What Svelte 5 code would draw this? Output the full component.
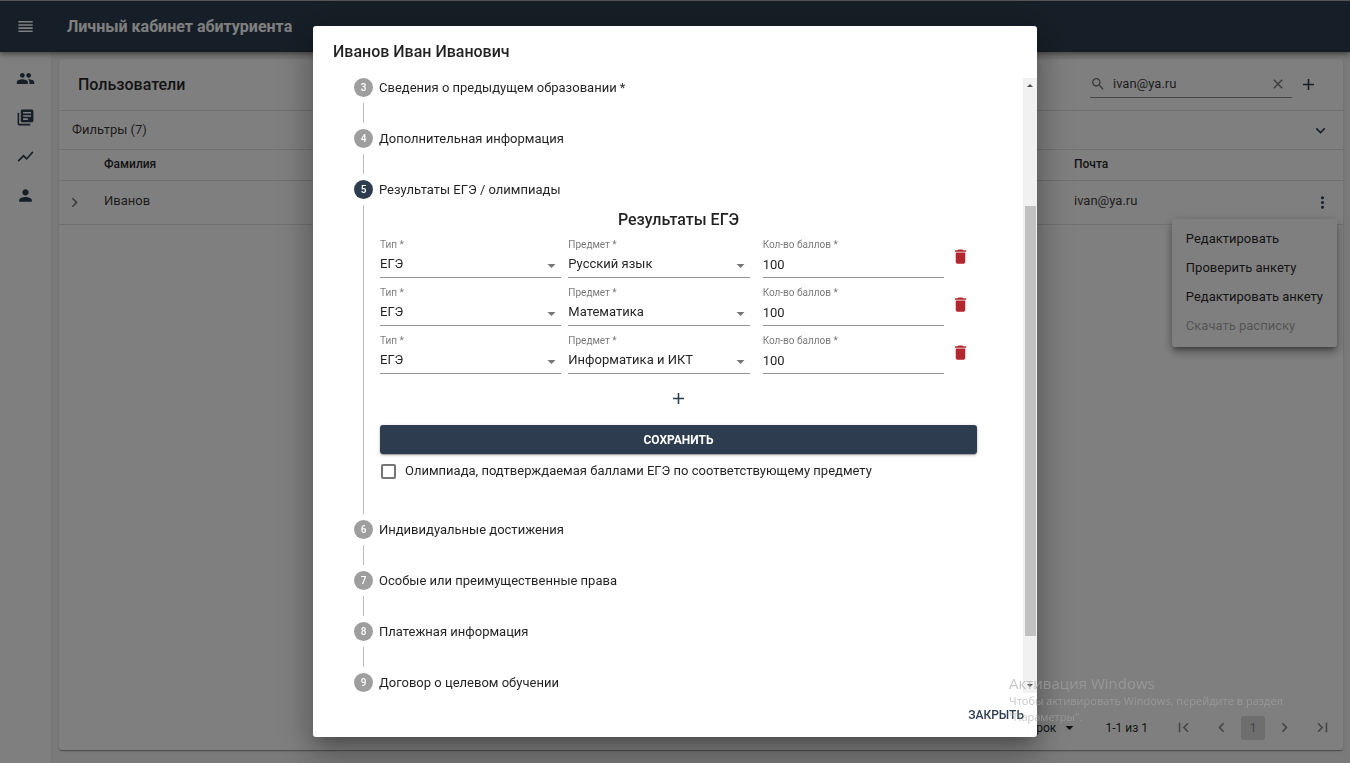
<script>
  const icons = {
    menu: 'M3 15h18v-2H3v2zm0 4h18v-2H3v2zm0-8h18V9H3v2zm0-6v2h18V5H3z',
    people: 'M16 11c1.66 0 2.99-1.34 2.99-3S17.66 5 16 5c-1.66 0-3 1.34-3 3s1.34 3 3 3zm-8 0c1.66 0 2.99-1.34 2.99-3S9.66 5 8 5C6.34 5 5 6.34 5 8s1.34 3 3 3zm0 2c-2.33 0-7 1.17-7 3.5V19h14v-2.5c0-2.33-4.67-3.5-7-3.5zm8 0c-.29 0-.62.02-.97.05 1.16.84 1.97 1.97 1.97 3.45V19h6v-2.5c0-2.33-4.67-3.5-7-3.5z',
    books: 'M4 6H2v14c0 1.1.9 2 2 2h14v-2H4V6zm16-4H8c-1.1 0-2 .9-2 2v12c0 1.1.9 2 2 2h12c1.1 0 2-.9 2-2V4c0-1.1-.9-2-2-2zm-1 9H9V9h10v2zm-4 4H9v-2h6v2zm4-8H9V5h10v2z',
    chart: 'M3.5 18.49l6-6.01 4 4L22 6.92l-1.41-1.41-7.09 7.97-4-4L2 16.99z',
    person: 'M12 12c2.21 0 4-1.79 4-4s-1.79-4-4-4-4 1.79-4 4 1.79 4 4 4zm0 2c-2.67 0-8 1.34-8 4v2h16v-2c0-2.66-5.33-4-8-4z',
    search: 'M15.5 14h-.79l-.28-.27C15.41 12.59 16 11.11 16 9.5 16 5.91 13.09 3 9.5 3S3 5.91 3 9.5 5.91 16 9.5 16c1.61 0 3.09-.59 4.23-1.57l.27.28v.79l5 4.99L20.49 19l-4.99-5zm-6 0C7.01 14 5 11.99 5 9.5S7.01 5 9.5 5 14 7.01 14 9.5 11.99 14 9.5 14z',
    clear: 'M19 6.41L17.59 5 12 10.59 6.41 5 5 6.41 10.59 12 5 17.59 6.41 19 12 13.41 17.59 19 19 17.59 13.41 12z',
    add: 'M19 13h-6v6h-2v-6H5v-2h6V5h2v6h6v2z',
    down: 'M16.59 8.59L12 13.17 7.41 8.59 6 10l6 6 6-6z',
    more: 'M12 8c1.1 0 2-.9 2-2s-.9-2-2-2-2 .9-2 2 .9 2 2 2zm0 2c-1.1 0-2 .9-2 2s.9 2 2 2 2-.9 2-2-.9-2-2-2zm0 6c-1.1 0-2 .9-2 2s.9 2 2 2 2-.9 2-2-.9-2-2-2z',
    left: 'M15.41 7.41L14 6l-6 6 6 6 1.41-1.41L10.83 12z',
    right: 'M10 6L8.59 7.41 13.17 12l-4.58 4.59L10 18l6-6z',
    first: 'M18.41 16.59L13.82 12l4.59-4.59L17 6l-6 6 6 6zM6 6h2v12H6z',
    last: 'M5.59 7.41L10.18 12l-4.59 4.59L7 18l6-6-6-6zM16 6h2v12h-2z',
    trash: 'M6 19c0 1.1.9 2 2 2h8c1.1 0 2-.9 2-2V7H6v12zM19 4h-3.5l-1-1h-5l-1 1H5v2h14V4z',
    drop: 'M7 10l5 5 5-5z'
  };

  const nav = [
    { icon: 'people', label: 'Пользователи' },
    { icon: 'books', label: 'Заявления' },
    { icon: 'chart', label: 'Статистика' },
    { icon: 'person', label: 'Профиль' }
  ];

  const steps = [
    { n: 3, title: 'Сведения о предыдущем образовании *' },
    { n: 4, title: 'Дополнительная информация' },
    { n: 5, title: 'Результаты ЕГЭ / олимпиады' },
    { n: 6, title: 'Индивидуальные достижения' },
    { n: 7, title: 'Особые или преимущественные права' },
    { n: 8, title: 'Платежная информация' },
    { n: 9, title: 'Договор о целевом обучении' }
  ];

  const subjects = ['Русский язык', 'Математика', 'Информатика и ИКТ'];
  let active = $state(5);
  let exams = $state(subjects.map((subject) => ({ type: 'ЕГЭ', subject, score: '100' })));
  let olympiad = $state(false);
  let query = $state('ivan@ya.ru');

  const addExam = () => exams.push({ type: 'ЕГЭ', subject: subjects[0], score: '' });
  const removeExam = (i) => exams.splice(i, 1);
</script>

{#snippet icon(name)}
  <svg class="icon" viewBox="0 0 24 24" aria-hidden="true"><path d={icons[name]} /></svg>
{/snippet}

<div class="shell">
  <header class="appbar">
    <button class="ib" aria-label="Меню">{@render icon('menu')}</button>
    <h1>Личный кабинет абитуриента</h1>
  </header>

  <div class="body">
    <nav class="side">
      {#each nav as item}
        <a href="#{item.icon}" aria-label={item.label}>{@render icon(item.icon)}</a>
      {/each}
    </nav>

    <main class="card">
      <div class="toolbar">
        <h2>Пользователи</h2>
        <div class="search">
          {@render icon('search')}
          <input type="text" aria-label="Поиск" bind:value={query} />
          <button class="ib" aria-label="Очистить" onclick={() => (query = '')}>{@render icon('clear')}</button>
        </div>
        <button class="ib add" aria-label="Добавить">{@render icon('add')}</button>
      </div>

      <button class="filters"><span>Фильтры (7)</span>{@render icon('down')}</button>

      <table>
        <colgroup><col class="c-open" /><col /><col class="c-mail" /><col class="c-act" /></colgroup>
        <thead>
          <tr><th></th><th>Фамилия</th><th>Почта</th><th></th></tr>
        </thead>
        <tbody>
          <tr>
            <td class="open"><button class="ib" aria-label="Раскрыть">{@render icon('right')}</button></td>
            <td>Иванов</td>
            <td>ivan@ya.ru</td>
            <td class="act">
              <button class="ib" aria-label="Действия">{@render icon('more')}</button>
              <div class="menu">
                <button>Редактировать</button>
                <button>Проверить анкету</button>
                <button>Редактировать анкету</button>
                <button disabled>Скачать расписку</button>
              </div>
            </td>
          </tr>
        </tbody>
      </table>

      <footer class="pager">
        <div class="rows">
          <select aria-label="Строк на странице"><option>5 строк</option></select>
          {@render icon('drop')}
        </div>
        <span class="range">1-1 из 1</span>
        <button class="ib" aria-label="Первая страница">{@render icon('first')}</button>
        <button class="ib" aria-label="Предыдущая страница">{@render icon('left')}</button>
        <button class="page">1</button>
        <button class="ib" aria-label="Следующая страница">{@render icon('right')}</button>
        <button class="ib" aria-label="Последняя страница">{@render icon('last')}</button>
      </footer>
    </main>
  </div>
</div>

<div class="backdrop">
  <div class="dialog" role="dialog" aria-modal="true" aria-labelledby="dialog-title">
    <h2 id="dialog-title">Иванов Иван Иванович</h2>

    <div class="scroller">
      <div class="content">
        {#each steps as step, i}
          <button class="step" class:active={active === step.n} onclick={() => (active = step.n)}>
            <span class="num">{step.n}</span><span>{step.title}</span>
          </button>
          {#if active === step.n}
            <div class="step-body">
              <h3>Результаты ЕГЭ</h3>
              {#each exams as exam, row}
                <div class="exam">
                  <div class="field">
                    <label for="type-{row}">Тип *</label>
                    <select id="type-{row}" bind:value={exam.type}><option>ЕГЭ</option></select>
                    {@render icon('drop')}
                  </div>
                  <div class="field">
                    <label for="subject-{row}">Предмет *</label>
                    <select id="subject-{row}" bind:value={exam.subject}>
                      {#each subjects as s}<option>{s}</option>{/each}
                    </select>
                    {@render icon('drop')}
                  </div>
                  <div class="field score">
                    <label for="score-{row}">Кол-во баллов *</label>
                    <input id="score-{row}" type="text" bind:value={exam.score} />
                  </div>
                  <button class="ib del" aria-label="Удалить" onclick={() => removeExam(row)}>{@render icon('trash')}</button>
                </div>
              {/each}
              <button class="ib plus" aria-label="Добавить результат" onclick={addExam}>{@render icon('add')}</button>
              <button class="save">СОХРАНИТЬ</button>
              <label class="check">
                <input type="checkbox" bind:checked={olympiad} />
                <span>Олимпиада, подтверждаемая баллами ЕГЭ по соответствующему предмету</span>
              </label>
            </div>
          {:else if i < steps.length - 1}
            <div class="connector"></div>
          {/if}
        {/each}
      </div>
      <div class="bar" aria-hidden="true">
        <svg viewBox="0 0 14 14"><path d="M4 9l3-3 3 3z" /></svg>
        <div class="track"><div class="thumb"></div></div>
        <svg viewBox="0 0 14 14"><path d="M4 5l3 3 3-3z" /></svg>
      </div>
    </div>

    <div class="actions"><button>ЗАКРЫТЬ</button></div>
  </div>
</div>

<div class="watermark">
  <strong>Активация Windows</strong>
  <span>Чтобы активировать Windows, перейдите в раздел "Параметры".</span>
</div>

<style>
  :global(body) {
    margin: 0;
    background: #f4f4f4;
    color: rgba(0, 0, 0, 0.87);
    font-family: Roboto, 'Liberation Sans', sans-serif;
    font-size: 13px;
    line-height: 20px;
  }
  * { box-sizing: border-box; }
  h1, h2, h3 { margin: 0; font-size: 16px; font-weight: 500; line-height: 24px; }
  button, input, select {
    margin: 0;
    padding: 0;
    border: 0;
    border-radius: 0;
    background: none;
    color: inherit;
    font: inherit;
    outline: 0;
  }
  select { appearance: none; }
  .icon { display: block; flex: none; width: 19px; height: 19px; fill: currentColor; }
  .ib { display: flex; flex: none; align-items: center; justify-content: center; }

  .shell { display: flex; flex-direction: column; height: 100vh; }
  .appbar {
    position: relative;
    display: flex;
    flex: none;
    align-items: center;
    gap: 32px;
    height: 52px;
    padding: 0 16px;
    border-top: 1px solid #aaa;
    background: #2d3d4f;
    color: #fff;
    box-shadow: 0 2px 4px rgba(0, 0, 0, 0.3), 0 3px 8px rgba(0, 0, 0, 0.2);
  }
  .appbar h1 { font-weight: 700; }
  .body { display: flex; flex: 1; min-height: 0; }
  .side {
    display: flex;
    flex: none;
    flex-direction: column;
    gap: 20px;
    width: 52px;
    padding: 17px 16px;
    background: #fff;
    border-right: 1px solid #eee;
    color: #2d3d4f;
  }
  .side a { color: inherit; }
  .card {
    display: flex;
    flex: 1;
    flex-direction: column;
    min-width: 0;
    margin: 7px 7px 13px;
    border-radius: 3px;
    background: #fff;
    box-shadow: 0 2px 1px -1px rgba(0, 0, 0, 0.2), 0 1px 1px rgba(0, 0, 0, 0.14), 0 1px 3px rgba(0, 0, 0, 0.12);
  }
  .toolbar { display: flex; align-items: center; height: 52px; padding: 0 19px; border-bottom: 1px solid #e0e0e0; }
  .search {
    display: flex;
    align-items: center;
    width: 202px;
    height: 26px;
    margin-left: auto;
    border-bottom: 1px solid #8c8c8c;
  }
  .search .icon { width: 16px; height: 16px; color: #757575; }
  .search input { flex: 1; min-width: 0; padding-left: 7px; }
  .search button { width: 28px; }
  .add { width: 32px; color: #2d3d4f; }
  .search, .filters, td { color: rgba(0, 0, 0, 0.8); }
  .filters {
    display: flex;
    align-items: center;
    justify-content: space-between;
    height: 39px;
    padding: 0 13px;
    border-bottom: 1px solid #e0e0e0;
  }
  .filters .icon { color: #2d3d4f; }
  table { width: 100%; border-collapse: collapse; table-layout: fixed; }
  .c-open { width: 32px; }
  .c-mail { width: 242px; }
  .c-act { width: 40px; }
  th, td { height: 30px; padding: 0 13px; border-bottom: 1px solid #e0e0e0; text-align: left; }
  th { padding-bottom: 2px; font-size: 12px; font-weight: 500; }
  td { height: 44px; padding-bottom: 2px; }
  td.open { padding: 0 6px; }
  .open .icon { color: #757575; }
  td.act { position: relative; padding: 0 10px; }
  .act .ib { color: #2d3d4f; }
  .menu {
    position: absolute;
    top: 38px;
    right: 6px;
    display: flex;
    flex-direction: column;
    width: max-content;
    padding: 6px 0;
    border-radius: 3px;
    background: #fff;
    box-shadow: 0 4px 4px -2px rgba(0, 0, 0, 0.3), 0 6px 8px rgba(0, 0, 0, 0.2), 0 2px 12px rgba(0, 0, 0, 0.2);
  }
  .menu button { height: 29px; padding: 0 14px; color: rgba(0, 0, 0, 0.87); text-align: left; }
  .menu button:disabled { opacity: 0.4; }
  .pager {
    display: flex;
    align-items: center;
    justify-content: flex-end;
    gap: 19px;
    height: 45px;
    margin-top: auto;
    padding-right: 11px;
    font-size: 12px;
  }
  .pager .ib, .page { color: #8a8a8a; }
  .page { width: 24px; height: 24px; margin: 0 -9px; border-radius: 3px; background: #dcdcdc; }
  .rows { display: flex; align-items: center; gap: 4px; }
  .range { margin: 0 7px; }

  .backdrop {
    position: fixed;
    inset: 0;
    display: flex;
    align-items: center;
    justify-content: center;
    padding: 26px;
    background: rgba(0, 0, 0, 0.5);
  }
  .dialog {
    display: flex;
    flex-direction: column;
    width: 100%;
    max-width: 724px;
    height: 100%;
    border-radius: 3px;
    background: #fff;
    box-shadow: 0 9px 12px -6px rgba(0, 0, 0, 0.2), 0 19px 30px 2px rgba(0, 0, 0, 0.14), 0 7px 37px 6px rgba(0, 0, 0, 0.2);
  }
  .dialog h2 { flex: none; padding: 14px 20px; }
  .scroller { display: flex; flex: 1; min-height: 0; overflow: hidden; }
  .content { flex: 1; min-width: 0; padding: 0 46px 0 41px; }
  .step { display: flex; align-items: center; gap: 6px; height: 19px; color: rgba(0, 0, 0, 0.87); text-align: left; }
  .num {
    display: flex;
    align-items: center;
    justify-content: center;
    width: 19px;
    height: 19px;
    border-radius: 50%;
    background: #9e9e9e;
    color: #fff;
    font-size: 10px;
    font-weight: 500;
  }
  .active .num { background: #2d3d4f; }
  .connector { height: 20px; margin: 6px 9px; border-left: 1px solid #bdbdbd; }
  .step-body {
    display: flex;
    flex-direction: column;
    margin: 6px 0 6px 9px;
    padding: 3px 0 26px 16px;
    border-left: 1px solid #bdbdbd;
  }
  h3 { text-align: center; }
  .exam { display: flex; gap: 7px; height: 48px; padding: 6px 6px 0 0; }
  .field { position: relative; display: flex; flex: 1; flex-direction: column; min-width: 0; height: 40px; border-bottom: 1px solid #949494; }
  .field label { color: rgba(0, 0, 0, 0.54); font-size: 10px; line-height: 14px; }
  .field select, .field input { width: 100%; height: 24px; }
  .field .icon { position: absolute; right: 0; bottom: 2px; color: #757575; pointer-events: none; }
  .score { margin-left: 6px; }
  .del { width: 20px; height: 20px; margin-top: 8px; color: #b3262e; }
  .plus { align-self: center; height: 20px; margin: 12px 0 17px; color: #2d3d4f; }
  .save {
    height: 29px;
    border-radius: 3px;
    background: #2d3d4f;
    color: #fff;
    font-size: 12px;
    font-weight: 700;
    box-shadow: 0 2px 1px -1px rgba(0, 0, 0, 0.2), 0 1px 3px rgba(0, 0, 0, 0.3);
  }
  .check { display: flex; align-items: center; gap: 9px; height: 34px; padding-left: 1px; }
  .check input { appearance: none; width: 15px; height: 15px; border: 2px solid #757575; border-radius: 2px; }
  .check input:checked { background: #2d3d4f; }
  .bar { display: flex; flex: none; flex-direction: column; width: 14px; background: #f1f1f1; }
  .bar svg { flex: none; width: 14px; height: 14px; fill: #505050; }
  .track { flex: 1; padding-top: 114px; }
  .thumb { height: 91%; width: 11px; margin: 0 auto; background: #c1c1c1; }
  .actions { display: flex; flex: none; align-items: center; justify-content: flex-end; height: 44px; padding: 0 13px; }
  .actions button { color: #2d3d4f; font-size: 12px; font-weight: 500; }

  .watermark {
    position: fixed;
    right: 40px;
    bottom: 38px;
    display: flex;
    flex-direction: column;
    width: 301px;
    color: rgba(167, 167, 167, 0.62);
    font-family: 'Open Sans', 'Noto Sans', sans-serif;
    font-size: 11px;
    line-height: 16px;
    pointer-events: none;
  }
  .watermark strong { font-size: 15px; font-weight: 400; line-height: 20px; }
</style>
